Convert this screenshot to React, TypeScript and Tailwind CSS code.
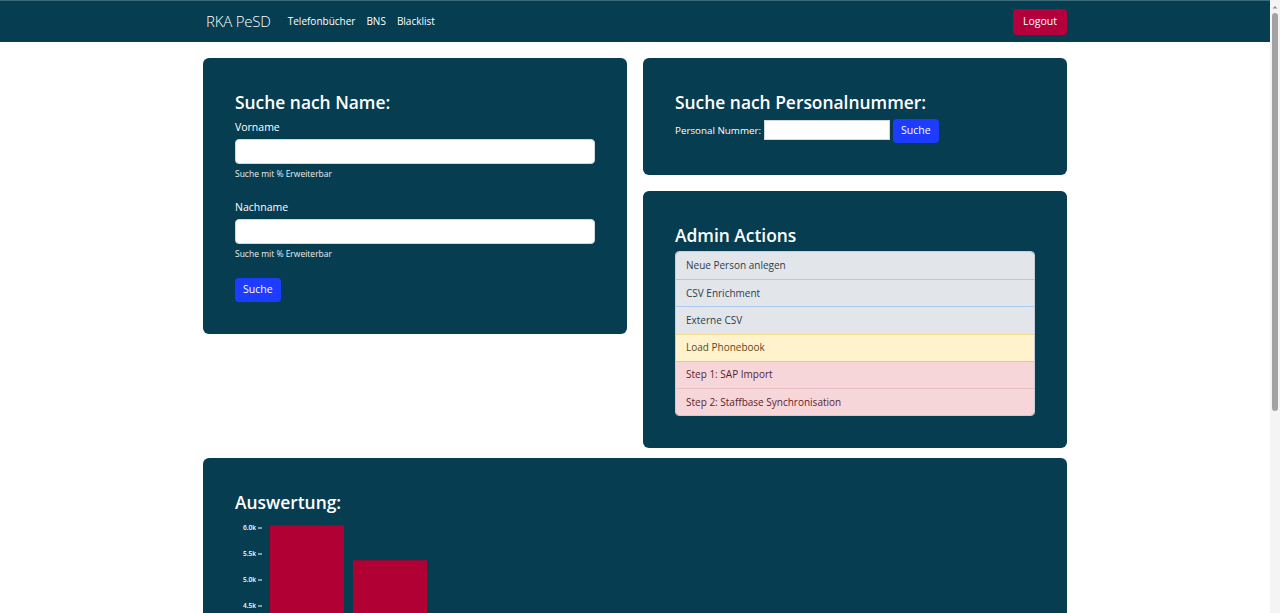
import React from 'react';

const adminActions = [
  { label: 'Neue Person anlegen', tone: 'gray' },
  { label: 'CSV Enrichment', tone: 'gray' },
  { label: 'Externe CSV', tone: 'gray' },
  { label: 'Load Phonebook', tone: 'yellow' },
  { label: 'Step 1: SAP Import', tone: 'red' },
  { label: 'Step 2: Staffbase Synchronisation', tone: 'red' },
];

const toneClass: Record<string, string> = {
  gray: 'bg-[#e2e5ea] text-[#2f3d4a] border-[#a9c9ee]',
  yellow: 'bg-[#fff2cc] text-[#5c4a12] border-[#f5dc8a]',
  red: 'bg-[#f7d6da] text-[#5a1e2a] border-[#e9bcc2]',
};

const ticks = ['6.0k', '5.5k', '5.0k', '4.5k'];
const bars = [6050, 5380];

function Chart() {
  // y: 6.0k at 8px, 26px per 0.5k
  const yOf = (v: number) => 8 + ((6000 - v) / 500) * 26;
  return (
    <svg width="800" height="200" className="block">
      {ticks.map((t, i) => (
        <g key={t}>
          <text x="21" y={8 + i * 26 + 2.3} fill="#ffffff" fontSize="6.6" textAnchor="end" fontFamily="Open Sans, sans-serif" fontWeight="600">
            {t}
          </text>
          <line x1="23" x2="27" y1={8 + i * 26} y2={8 + i * 26} stroke="#ffffff" strokeWidth="1" />
        </g>
      ))}
      {bars.map((v, i) => (
        <rect key={i} x={35 + i * 83} y={yOf(v)} width="74" height={200 - yOf(v)} fill="#b00034" />
      ))}
    </svg>
  );
}

function Scrollbar() {
  return (
    <aside className="w-[10px] h-screen bg-[#f4f4f4] flex flex-col items-center shrink-0">
      <svg width="10" height="11" viewBox="0 0 10 11" className="mt-[2px]">
        <path d="M2.5 6.5 L5 4 L7.5 6.5 Z" fill="#8a8a8a" />
      </svg>
      <div className="w-[6px] h-[398px] rounded-full bg-[#a3a3a3]" />
    </aside>
  );
}

export default function App() {
  return (
    <div className="flex h-screen bg-white font-['Open_Sans',sans-serif]">
      <div className="flex-1 h-screen overflow-hidden">
        <nav className="bg-[#063d51] border-t border-[#3b6a7b] h-[42px]">
          <div className="w-[864px] mx-auto h-full flex items-center justify-between">
            <div className="flex items-center">
              <span className="pl-[3px] text-[15px] font-light text-white tracking-[-0.2px]">RKA PeSD</span>
              <div className="flex items-center gap-[11px] ml-[17px] text-[10px] text-white">
                <span>Telefonbücher</span>
                <span>BNS</span>
                <span>Blacklist</span>
              </div>
            </div>
            <button className="bg-[#b3003c] text-white text-[10.5px] h-[26px] px-[10px] rounded-[4px]">Logout</button>
          </div>
        </nav>

        <main className="w-[864px] mx-auto pt-4 pb-10 flex flex-col gap-[10px]">
          <div className="grid grid-cols-2 gap-4 items-start">
            {/* Name search */}
            <div className="bg-[#063d51] rounded-[6px] p-8 text-white">
              <h3 className="text-[17.4px] font-semibold leading-6 mb-[5px]">Suche nach Name:</h3>
              <label className="block text-[10.5px] leading-4 mb-[4px]">Vorname</label>
              <input className="block w-full h-[25px] bg-white rounded-[4px] border border-[#cfd6dc]" />
              <p className="text-[8.5px] leading-3 mt-[4px] text-[#e6eef2]">Suche mit % Erweiterbar</p>
              <label className="block text-[10.5px] leading-4 mt-[19px] mb-[4px]">Nachname</label>
              <input className="block w-full h-[25px] bg-white rounded-[4px] border border-[#cfd6dc]" />
              <p className="text-[8.5px] leading-3 mt-[4px] text-[#e6eef2]">Suche mit % Erweiterbar</p>
              <button className="mt-[18px] h-[24px] px-[8px] bg-[#1d3cff] rounded-[4px] text-[10.5px] text-white">Suche</button>
            </div>

            <div className="flex flex-col gap-[16px]">
              {/* Personalnummer */}
              <div className="bg-[#063d51] rounded-[6px] p-8 text-white">
                <h3 className="text-[17.4px] font-semibold leading-6 mb-[5px]">Suche nach Personalnummer:</h3>
                <div className="flex items-center">
                  <span className="text-[9.8px] mr-[3px]">Personal Nummer:</span>
                  <input className="w-[126px] h-[20px] bg-white border border-[#cfd6dc] -mt-[3px]" />
                  <button className="ml-[3px] h-[24px] px-[8px] bg-[#1d3cff] rounded-[4px] text-[10.5px] text-white">Suche</button>
                </div>
              </div>

              {/* Admin */}
              <div className="bg-[#063d51] rounded-[6px] p-8 text-white">
                <h3 className="text-[17.4px] font-semibold leading-6 mb-[4px]">Admin Actions</h3>
                <div className="rounded-[4px] overflow-hidden border border-[#c9ced6]">
                  {adminActions.map((a, i) => (
                    <div
                      key={a.label}
                      className={`h-[27.2px] flex items-center px-[10px] text-[10px] ${toneClass[a.tone]} ${i > 0 ? 'border-t' : ''}`}
                    >
                      {a.label}
                    </div>
                  ))}
                </div>
              </div>
            </div>
          </div>

          {/* Auswertung */}
          <div className="bg-[#063d51] rounded-[6px] px-8 pt-8 pb-8 text-white">
            <h3 className="text-[17.4px] font-semibold leading-6 mb-[6px]">Auswertung:</h3>
            <Chart />
          </div>
        </main>
      </div>
      <Scrollbar />
    </div>
  );
}
